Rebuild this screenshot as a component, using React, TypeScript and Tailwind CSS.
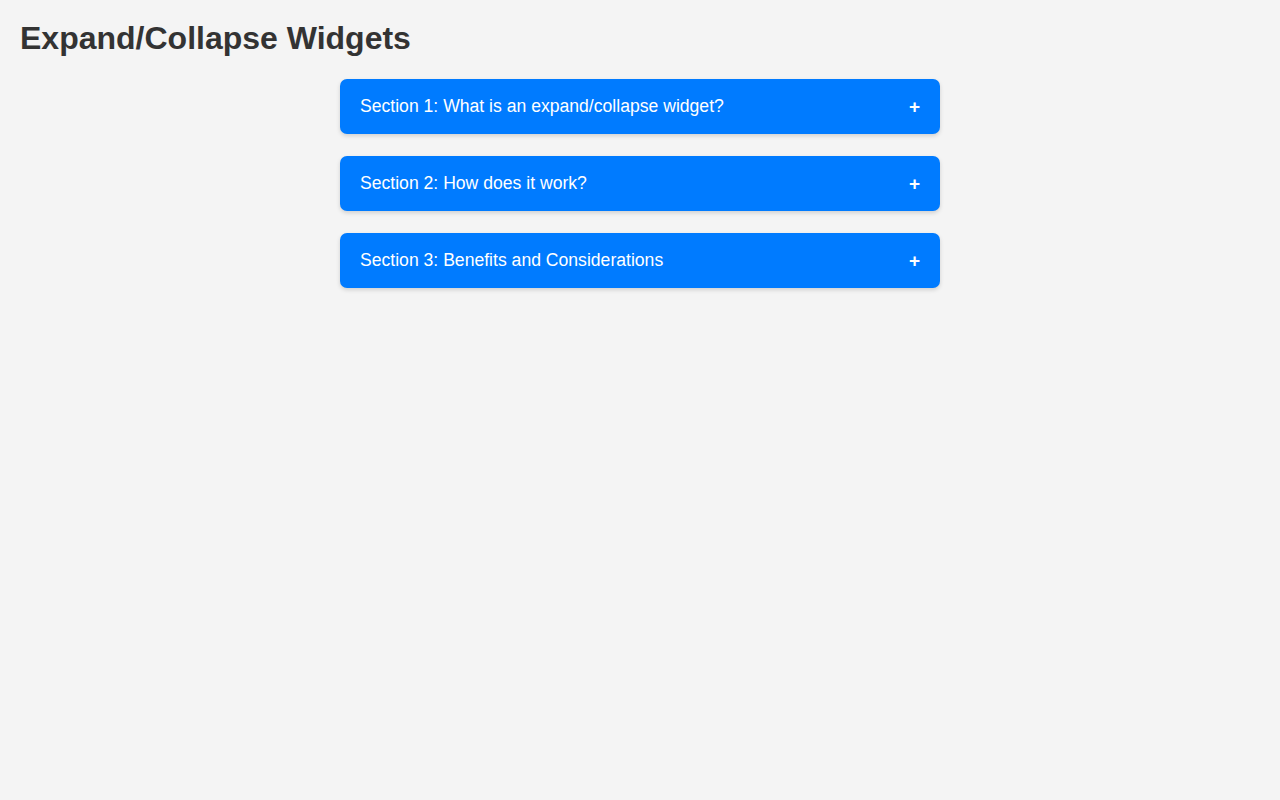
import React from "react";

const sections = [
  "Section 1: What is an expand/collapse widget?",
  "Section 2: How does it work?",
  "Section 3: Benefits and Considerations",
];

export default function App() {
  return (
    <div
      className="min-h-[800px] bg-[#f4f4f4] px-5 pt-[20px]"
      style={{ fontFamily: '"Liberation Sans", Arial, sans-serif' }}
    >
      <h1 className="text-[32px] font-bold leading-[37px] text-[#333333] mb-[22px]">
        Expand/Collapse Widgets
      </h1>
      <div className="mx-auto flex w-[600px] flex-col gap-[22px]">
        {sections.map((s) => (
          <div
            key={s}
            className="flex h-[55px] items-center justify-between rounded-[7px] bg-[#007bff] px-5 text-[17.6px] text-white shadow-[0_2px_4px_rgba(0,0,0,0.15)]"
          >
            <span>{s}</span>
            <span className="text-[19px] font-bold leading-none">+</span>
          </div>
        ))}
      </div>
    </div>
  );
}
